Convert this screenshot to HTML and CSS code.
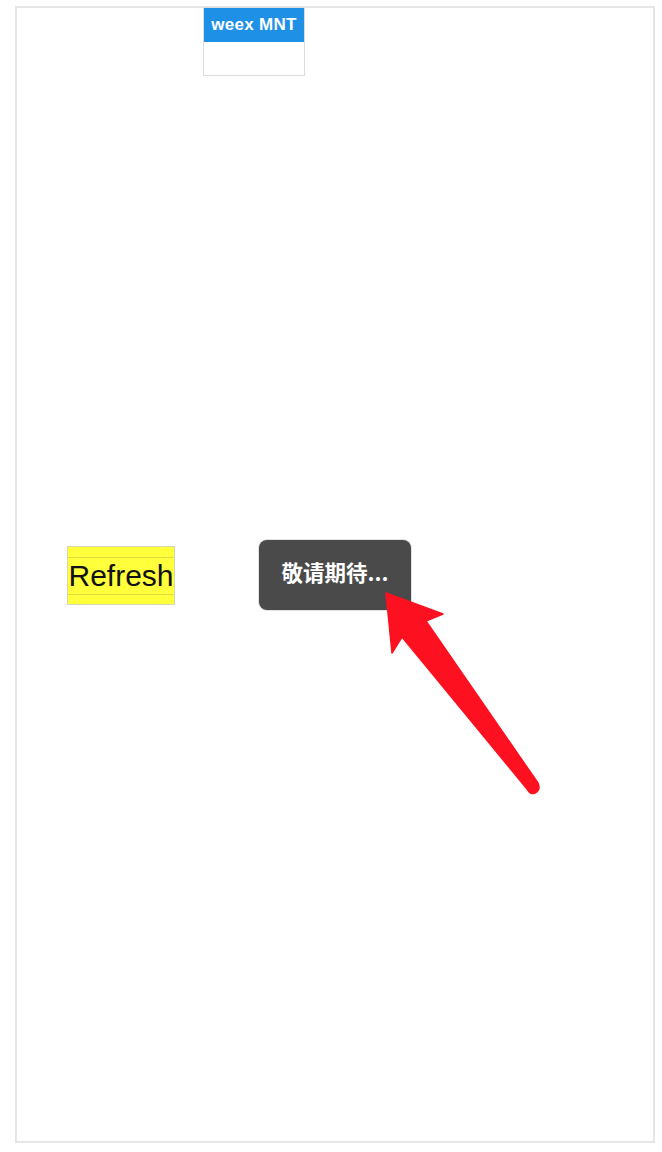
FILE: index.html
```html
<!DOCTYPE html>
<html lang="zh">
<head>
<meta charset="utf-8">
<title>weex MNT</title>
<link rel="stylesheet" href="styles.css">
</head>
<body>
<div class="frame">
  <div class="tabbox">
    <div class="tabbox-head"><span class="tabbox-title">weex MNT</span></div>
    <div class="tabbox-body"></div>
  </div>
  <div class="refresh"><span class="refresh-text">Refresh</span></div>
</div>
<div class="toast"><span class="toast-text">敬请期待...</span></div>
<svg class="arrow" width="662" height="1152" viewBox="0 0 662 1152">
  <path d="M386 593 L443 614 L426 621 L538 783 Q541 790 535 793 Q530 795 527 789 L402 637 L392 653 Z" fill="#fd1120" stroke="#fd1120" stroke-width="1.5" stroke-linejoin="round"/>
</svg>
</body>
</html>
```
FILE: styles.css
```css
html, body {
  margin: 0;
  padding: 0;
  background: #ffffff;
}
body {
  width: 662px;
  height: 1152px;
  position: relative;
  overflow: hidden;
  font-family: "Liberation Sans", Arial, "Noto Sans CJK SC", sans-serif;
}
.frame {
  box-sizing: border-box;
  margin: 6px 0 0 15px;
  width: 640px;
  height: 1137px;
  border: 2px solid #e6e6e6;
  display: flex;
  flex-direction: column;
  align-items: flex-start;
}
.tabbox {
  box-sizing: border-box;
  margin: -1px 0 0 186px;
  width: 102px;
  height: 69px;
  border: 1px solid #dcdcdc;
  display: flex;
  flex-direction: column;
}
.tabbox-head {
  height: 34px;
  background: #1e90e6;
  display: flex;
  align-items: center;
  justify-content: center;
}
.tabbox-title {
  color: #ffffff;
  font-weight: bold;
  font-size: 17px;
  letter-spacing: 0.3px;
}
.tabbox-body {
  flex: 1;
  background: #ffffff;
}
.refresh {
  box-sizing: border-box;
  margin: 470px 0 0 50px;
  width: 108px;
  height: 59px;
  background: #ffff3c;
  border: 1px solid #d8d8b0;
  display: flex;
  align-items: center;
  justify-content: center;
}
.refresh-text {
  font-size: 30px;
  color: #111111;
  line-height: 36px;
  border-top: 1px solid #e0dc40;
  border-bottom: 1px solid #e0dc40;
}
.toast {
  position: absolute;
  left: 259px;
  top: 540px;
  box-sizing: border-box;
  width: 152px;
  height: 70px;
  background: #4a4a4a;
  border-radius: 8px;
  box-shadow: 0 0 0 1px #e2e2e2;
  display: flex;
  align-items: center;
  justify-content: center;
}
.toast-text {
  color: #ffffff;
  font-weight: bold;
  font-size: 21.5px;
  font-family: "Noto Sans CJK SC", "Liberation Sans", sans-serif;
  margin-top: -7px;
}
.arrow {
  position: absolute;
  left: 0;
  top: 0;
  pointer-events: none;
}
```
